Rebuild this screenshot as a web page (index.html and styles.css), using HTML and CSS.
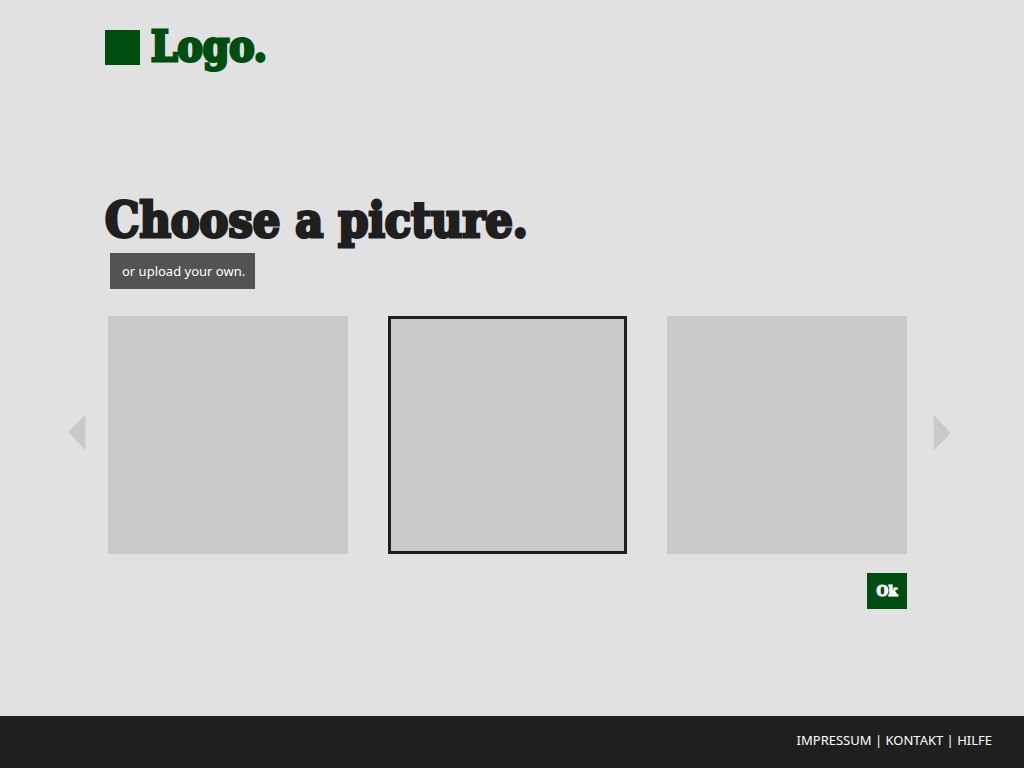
FILE: index.html
```html
<!DOCTYPE html>
<html lang="en">
<head>
<meta charset="utf-8">
<meta name="viewport" content="width=device-width, initial-scale=1">
<title>Choose a picture</title>
<link rel="stylesheet" href="styles.css">
</head>
<body>
<header class="site-header">
  <a class="logo" href="#"><span class="logo-mark"></span><span class="logo-name">Logo.</span></a>
</header>
<main class="main">
  <h1 class="title">Choose a picture.</h1>
  <button class="upload" type="button">or upload your own.</button>
  <div class="carousel">
    <button class="arrow" type="button" aria-label="Previous pictures">
      <svg class="arrow-icon" viewBox="0 0 18 36"><path d="M17.5 0V35.500L0 17Z"/></svg>
    </button>
    <div class="pictures">
      <button class="picture" type="button" aria-label="Picture 1"></button>
      <button class="picture selected" type="button" aria-label="Picture 2" aria-pressed="true"></button>
      <button class="picture" type="button" aria-label="Picture 3"></button>
    </div>
    <button class="arrow" type="button" aria-label="Next pictures">
      <svg class="arrow-icon" viewBox="0 0 18 36"><path d="M.7 0V35.500L17.700 18Z"/></svg>
    </button>
  </div>
  <div class="actions"><button class="ok" type="button">Ok</button></div>
</main>
<footer class="footer">
  <nav class="footer-nav"><a href="#">IMPRESSUM</a> | <a href="#">KONTAKT</a> | <a href="#">HILFE</a></nav>
</footer>
</body>
</html>
```
FILE: styles.css
```css
* { box-sizing: border-box; }

body {
  margin: 0;
  min-height: 100vh;
  display: flex;
  flex-direction: column;
  background: #e1e1e1;
  color: #1f1f1f;
  font-family: "Noto Sans", "Open Sans", sans-serif;
}

button {
  border: 0;
  padding: 0;
  font: inherit;
  cursor: pointer;
}

a { color: inherit; text-decoration: none; }

.site-header { padding: 24px 105px 0; }

.logo {
  display: inline-flex;
  align-items: center;
  gap: 11px;
  color: #004d12;
}

.logo-mark {
  width: 35px;
  height: 35px;
  background: #004d12;
}

.logo-name,
.title,
.ok {
  font-family: "DejaVu Serif Condensed", "DejaVu Serif", serif;
  font-weight: 700;
}

.logo-name {
  font-size: 42px;
  line-height: 46px;
  -webkit-text-stroke: 3px #004d12;
}

.main {
  flex: 1;
  display: flex;
  flex-direction: column;
  align-items: flex-start;
  padding: 120px 73px 40px 68px;
}

.title {
  margin: 0 0 3px 37px;
  font-size: 48px;
  line-height: 60px;
  -webkit-text-stroke: 3px #1f1f1f;
}

.upload {
  margin-left: 42px;
  padding: 0 10px 0 12px;
  background: #535353;
  color: #fff;
  font-size: 13px;
  line-height: 36px;
}

.carousel {
  width: 100%;
  display: flex;
  align-items: center;
  gap: 22px;
  margin-top: 27px;
}

.arrow {
  flex: none;
  padding-bottom: 4px;
  background: none;
}

.arrow:last-child { margin-left: 4px; }

.arrow-icon {
  display: block;
  width: 18px;
  height: 36px;
  fill: #c9c9c9;
}

.pictures {
  flex: 1;
  display: grid;
  grid-template-columns: repeat(3, 1fr);
  gap: 40px;
}

.picture {
  aspect-ratio: 240 / 238;
  background: #c9c9c9;
}

.picture.selected { border: 3px solid #1f1f1f; }

.actions {
  align-self: flex-end;
  margin: 19px 44px 0 0;
}

.ok {
  width: 40px;
  height: 36px;
  background: #004d12;
  color: #fff;
  font-size: 15px;
  -webkit-text-stroke: 1px #fff;
}

.footer {
  padding: 12px 32px 16px;
  background: #1f1f1f;
  color: #fff;
  font-size: 13px;
  line-height: 24px;
  text-align: right;
}
```
